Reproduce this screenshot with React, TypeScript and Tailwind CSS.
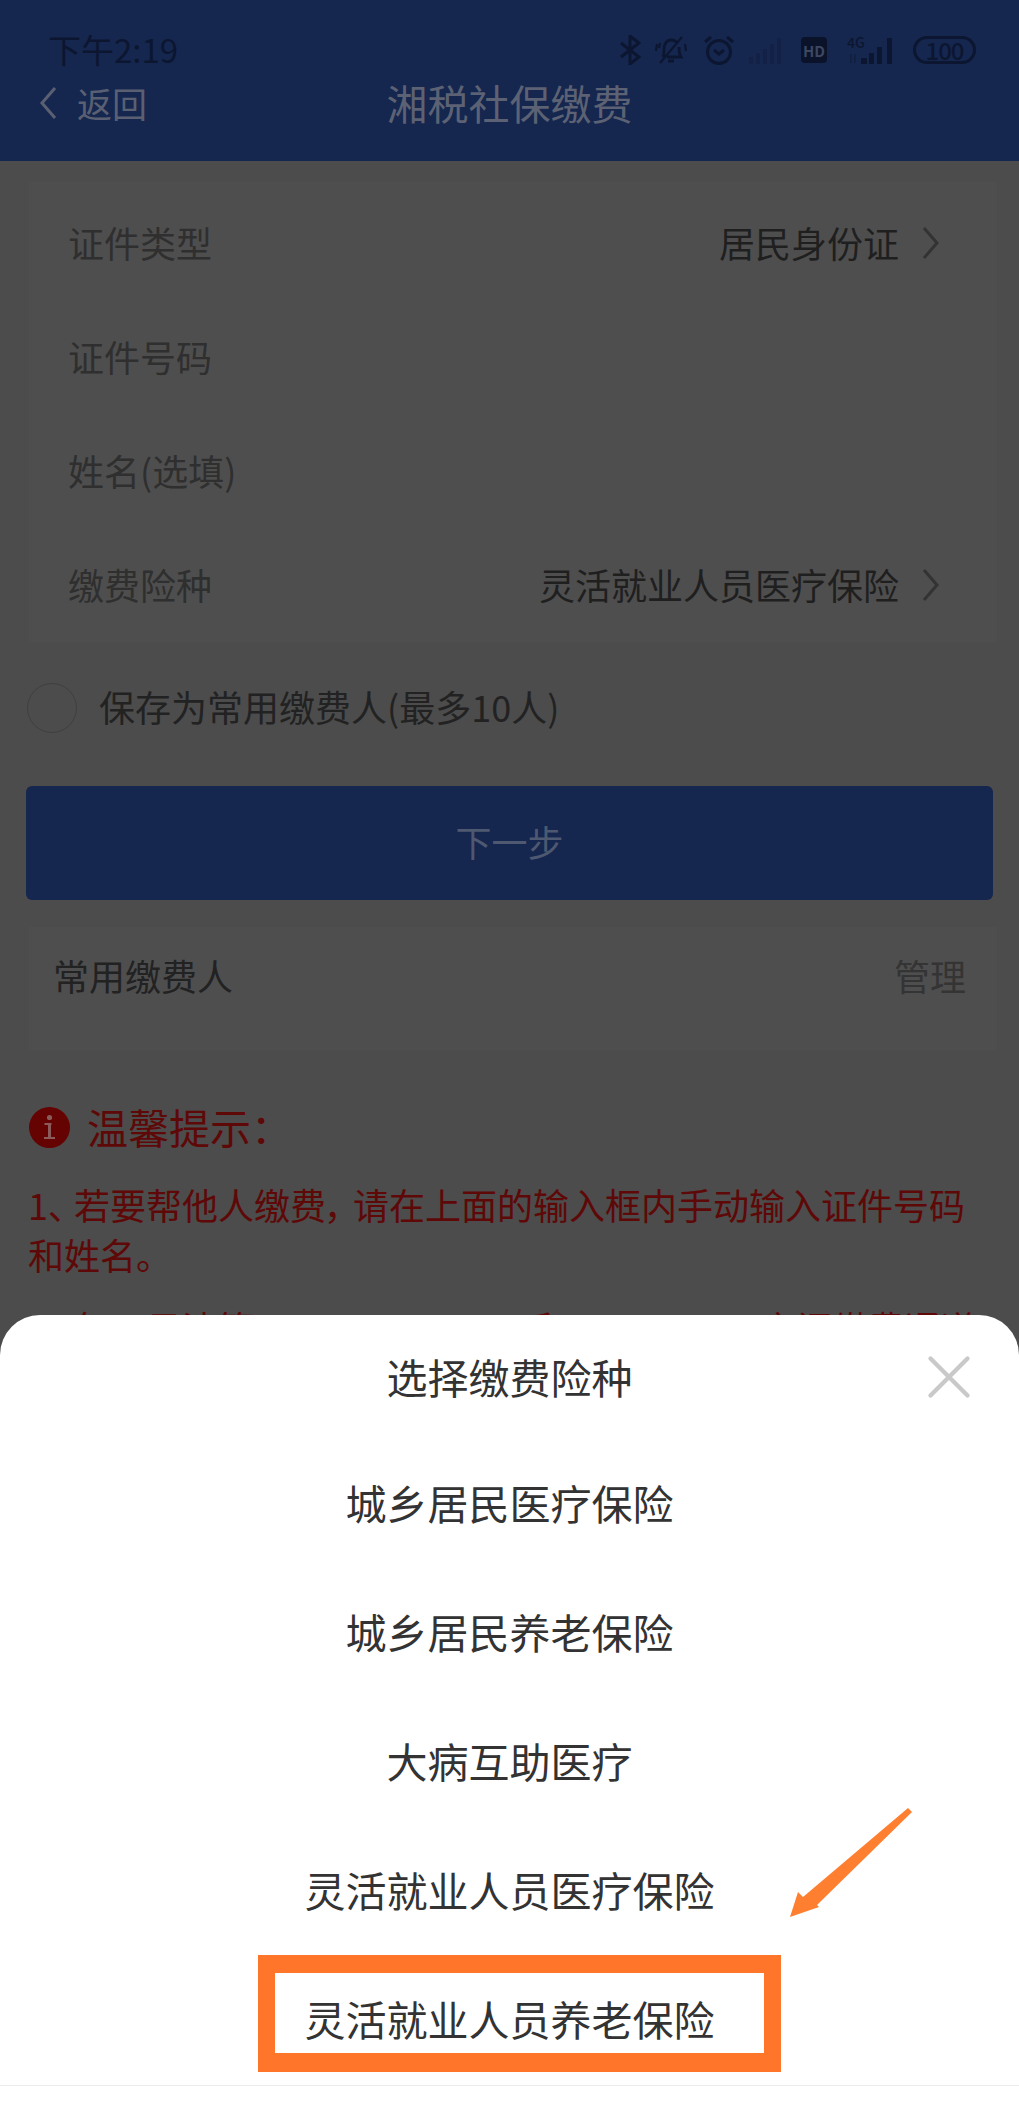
import { X } from "lucide-react";

const formRows = [
  { label: "证件类型", value: "居民身份证" },
  { label: "证件号码" },
  { label: "姓名(选填)" },
  { label: "缴费险种", value: "灵活就业人员医疗保险" },
];

const options = [
  "城乡居民医疗保险",
  "城乡居民养老保险",
  "大病互助医疗",
  "灵活就业人员医疗保险",
  "灵活就业人员养老保险",
];

function StatusIcons() {
  return (
    <div className="flex items-center text-[#0c1630]">
      {/* bluetooth */}
      <svg width="21" height="30" viewBox="0 0 21 30" fill="none" stroke="currentColor" strokeWidth="3">
        <path d="M1 8l18 14-9 7V1l9 7L1 22" />
      </svg>
      {/* muted bell */}
      <svg className="ml-[14px]" width="32" height="30" viewBox="0 0 32 30" fill="none" stroke="currentColor" strokeWidth="2.8">
        <path d="M8 22c1-2 1-5 1-8 0-5 3-9 7-9 3 0 5 1 6 3M24 12c0 4 0 7 2 10H12M13 26h6" />
        <path d="M27 2L5 28M2 9l-1 7M5 8l-1 5M30 9l1 7" strokeWidth="2.2" />
      </svg>
      {/* alarm */}
      <svg className="ml-[16px]" width="32" height="30" viewBox="0 0 32 30" fill="none" stroke="currentColor" strokeWidth="3">
        <circle cx="16" cy="17" r="11.5" />
        <path d="M11 15l5 4 5-4M2 7l6-5M30 7l-6-5" />
      </svg>
      {/* no-sim signal */}
      <svg className="ml-[13px] opacity-30" width="37" height="27" viewBox="0 0 37 27" fill="currentColor">
        <rect x="1" y="20" width="4" height="7" />
        <rect x="8" y="16" width="4" height="11" />
        <rect x="15" y="12" width="4" height="15" />
        <rect x="22" y="7" width="4" height="20" />
        <rect x="29" y="1" width="4" height="26" />
      </svg>
      <div className="ml-[16px] flex h-[26px] w-[26px] items-center justify-center rounded-[4px] bg-[#0a1329] text-[15px] font-bold leading-none text-[#3d4761]">
        HD
      </div>
      {/* 4G signal */}
      <div className="relative ml-[20px] h-[27px] w-[50px]">
        <span className="absolute left-0 top-[-2px] text-[14px] font-medium leading-[14px]">4G</span>
        <svg className="absolute left-0 top-0" width="50" height="27" viewBox="0 0 50 27" fill="currentColor">
          <path d="M3 17v9h1.5v-9zM7 17v9h1.5v-9z" opacity="0.5" />
          <rect x="14" y="21" width="6" height="6" />
          <rect x="22" y="16" width="5" height="11" />
          <rect x="30" y="10" width="5" height="17" />
          <rect x="40" y="1" width="5" height="26" />
        </svg>
      </div>
      <div className="ml-[16px] flex h-[28px] w-[63px] items-center justify-center rounded-[14px] border-[3px] border-[#0c1630] text-[24px] font-medium leading-none tracking-[-1px]">
        100
      </div>
    </div>
  );
}

function InfoIcon() {
  return (
    <svg width="41" height="41" viewBox="0 0 41 41">
      <circle cx="20.5" cy="20.5" r="20.5" fill="#650202" />
      <g fill="#8b5a5a">
        <circle cx="20.5" cy="10.5" r="2.6" />
        <rect x="15.5" y="16" width="7" height="2" />
        <rect x="19" y="16" width="3" height="15" />
        <rect x="15" y="30" width="11" height="2" />
      </g>
    </svg>
  );
}

// thin, tall chevron used in the form rows and the nav bar
function Chevron({ left, color }: { left?: boolean; color: string }) {
  return (
    <svg width="18" height="32" viewBox="0 0 18 32" fill="none" stroke={color} strokeWidth="3" className="shrink-0">
      <path d={left ? "M16 1L3 16l13 15" : "M2 1l13 15L2 31"} />
    </svg>
  );
}

export default function App() {
  return (
    <div className="relative h-[2118px] w-[1019px] overflow-hidden bg-[#4c4c4c] font-['Noto_Sans_CJK_SC',sans-serif]">
      <header className="h-[161px] bg-[#15264f]">
        <div className="flex h-[70px] translate-y-[15px] items-center justify-between pl-[48px] pr-[43px]">
          <span className="pb-[2px] text-[33px] leading-none text-[#0c1630]">下午2:19</span>
          <StatusIcons />
        </div>
        <div className="mt-[12px] grid h-[41px] grid-cols-[1fr_auto_1fr] items-center">
          <div className="flex items-center pl-[39px] text-[#5a6072]">
            <Chevron left color="#5a6072" />
            <span className="ml-[20px] text-[35px] leading-none">返回</span>
          </div>
          <h1 className="text-[41px] font-normal leading-none text-[#5c6274]">湘税社保缴费</h1>
          <div />
        </div>
      </header>

      <section className="ml-[29px] mt-[21px] w-[968px] bg-[#4e4e4e] pt-[4px]">
        {formRows.map((row) => (
          <div key={row.label} className="flex h-[114px] items-center justify-between pl-[39px] pr-[57px]">
            <span className="pb-[3px] text-[36px] leading-none text-[#2f2f2f]">{row.label}</span>
            {row.value && (
              <span className="flex items-center text-[36px] leading-none text-[#1f1f1f]">
                <span className="pb-[3px]">{row.value}</span>
                <span className="ml-[23px]">
                  <Chevron color="#333333" />
                </span>
              </span>
            )}
          </div>
        ))}
      </section>

      <div className="ml-[27px] mt-[41px] flex items-center">
        <div className="h-[50px] w-[50px] rounded-full border border-[#3f3f3f]" />
        <span className="ml-[22px] pb-[4px] text-[36px] leading-none text-[#222222]">保存为常用缴费人(最多10人)</span>
      </div>

      <button className="ml-[26px] mt-[53px] flex h-[114px] w-[967px] items-center justify-center rounded-[6px] bg-[#15264f] pb-[4px] text-[36px] text-[#4e5870]">
        下一步
      </button>

      <div className="ml-[29px] mt-[27px] w-[968px] bg-[#4e4e4e] pb-[23px]">
        <div className="flex h-[100px] items-center justify-between pb-[4px] pl-[24px] pr-[31px]">
          <span className="text-[36px] leading-none text-[#222222]">常用缴费人</span>
          <span className="text-[36px] leading-none text-[#343434]">管理</span>
        </div>
      </div>

      <div className="ml-[29px] mt-[56px] flex items-center">
        <InfoIcon />
        <span className="ml-[17px] pb-[2px] text-[41px] leading-none text-[#5e0808]">温馨提示：</span>
      </div>

      <div className="ml-[28px] mt-[30px] w-[960px] text-[36px] leading-[50px] text-[#5e0808]">
        <p>
          1<span className="mr-[8px] [font-feature-settings:'palt']">、</span>若要帮他人缴费<span className="mr-[9px] [font-feature-settings:'palt']">，</span>请在上面的输入框内手动输入证件号码和姓名。
        </p>
        <p className="mt-[23px]">
          2<span className="mr-[8px] [font-feature-settings:'palt']">、</span>每天日清算：23:50:00-00:30和15:55-16:00之间缴费通道关
        </p>
      </div>

      {/* bottom sheet */}
      <div className="absolute inset-x-0 bottom-0 top-[1315px] rounded-t-[40px] bg-white">
        <div className="relative flex h-[127px] items-start justify-center pt-[41px] text-[41px] leading-[41px] text-[#333333]">
          选择缴费险种
          <X size={74} strokeWidth={1.4} className="absolute right-[33px] top-[25px] text-[#c9c9c9]" />
        </div>
        {options.map((option) => (
          <div key={option} className="flex h-[129px] items-center justify-center pb-[8px] text-[41px] leading-none text-[#333333]">
            {option}
          </div>
        ))}
        <div className="-mt-[2px] border-t border-[#ececec]" />
      </div>

      {/* annotation */}
      <div className="absolute left-[258px] top-[1955px] h-[117px] w-[523px] border-x-[17px] border-b-[19px] border-t-[18px] border-[#ff7529]" />
      <svg className="absolute left-[780px] top-[1800px]" width="140" height="125" viewBox="0 0 140 125" fill="#ff7f31">
        <path d="M128 8l4 4-95 93 2 2-29 10 8-25 5 5z" />
      </svg>
    </div>
  );
}
